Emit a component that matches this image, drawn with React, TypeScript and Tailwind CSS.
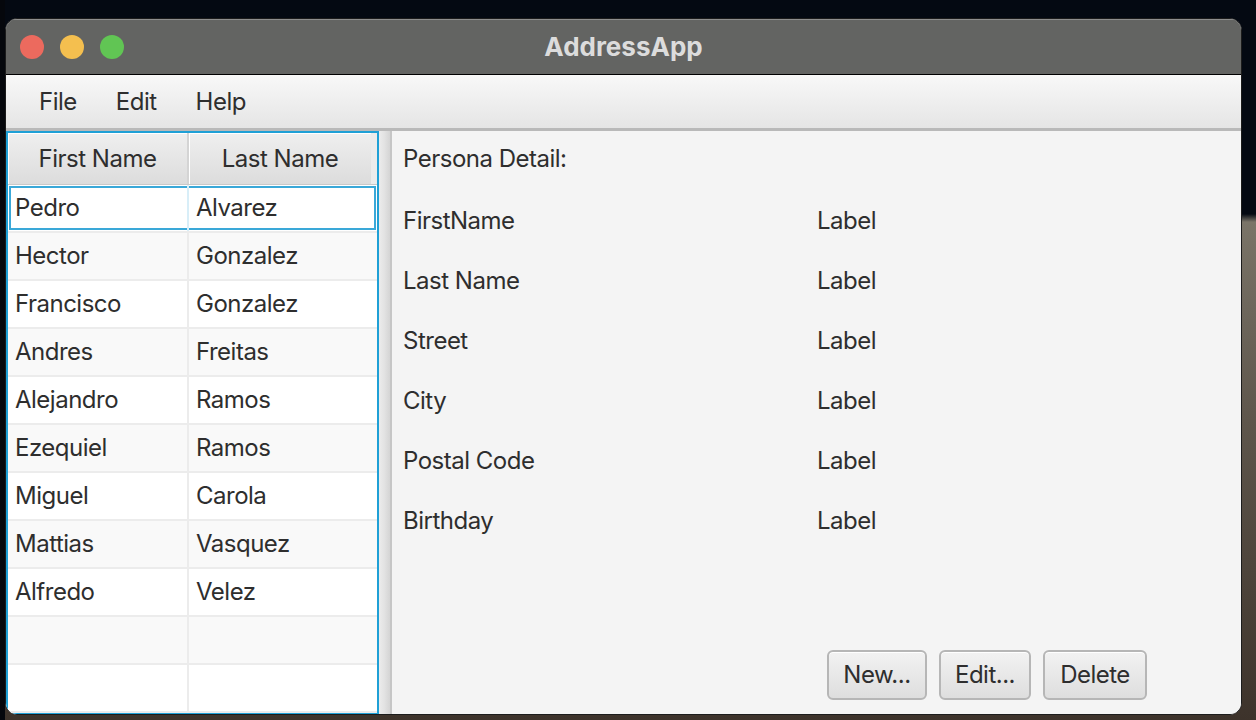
import React from "react";

const people = [
  ["Pedro", "Alvarez"],
  ["Hector", "Gonzalez"],
  ["Francisco", "Gonzalez"],
  ["Andres", "Freitas"],
  ["Alejandro", "Ramos"],
  ["Ezequiel", "Ramos"],
  ["Miguel", "Carola"],
  ["Mattias", "Vasquez"],
  ["Alfredo", "Velez"],
  ["", ""],
  ["", ""],
];

const details = ["FirstName", "Last Name", "Street", "City", "Postal Code", "Birthday"];

function FxButton({ children, width }: { children: React.ReactNode; width: string }) {
  return (
    <button
      className={`${width} h-[50px] rounded-[6px] border-2 border-[#b6b6b6] bg-[linear-gradient(180deg,#f2f2f2,#dedede)] text-[24px] tracking-[-0.5px] text-[#2e2e2e] shadow-[inset_0_1px_0_#ffffff]`}
    >
      {children}
    </button>
  );
}

export default function App() {
  return (
    <div className="h-[720px] w-[1256px] overflow-hidden bg-[linear-gradient(90deg,#05070c_0px,#05070c_5px,transparent_5px),linear-gradient(180deg,#040912_0px,#040912_214px,#7a7468_222px,#5e564c_420px,#3d332b_720px)] pl-[5px] pt-[18px] font-['Inter','Noto_Sans',sans-serif] tracking-[-0.5px] text-[#2e2e2e]">
      <div className="flex h-[697px] w-[1237px] flex-col overflow-hidden rounded-[12px] border border-[#1c1c1c] bg-[#f4f4f4]">
        {/* title bar */}
        <div className="relative flex h-[56px] shrink-0 items-center border-b border-black bg-[#636462] shadow-[inset_0_1px_0_#8e8e8e]">
          <div className="flex gap-[16px] pl-[14px]">
            <span className="h-[24px] w-[24px] rounded-full bg-[#ec6a5e]" />
            <span className="h-[24px] w-[24px] rounded-full bg-[#f4bf4f]" />
            <span className="h-[24px] w-[24px] rounded-full bg-[#61c554]" />
          </div>
          <div className="absolute inset-0 flex items-center justify-center text-[26px] font-bold tracking-normal text-[#dcdcdc]">
            AddressApp
          </div>
        </div>

        {/* menu bar */}
        <div className="flex h-[56px] shrink-0 items-center gap-[39px] border-b-[3px] border-[#b9b9b9] bg-[linear-gradient(180deg,#f8f8f8,#e5e5e5)] pl-[33px] text-[24px]">
          <span>File</span>
          <span>Edit</span>
          <span>Help</span>
        </div>

        {/* content */}
        <div className="flex min-h-0 flex-1">
          {/* table */}
          <div className="flex h-[584px] w-[373px] shrink-0 flex-col border-2 border-[#1fa0d6] bg-white">
            <div className="flex h-[52px] shrink-0 border-b border-[#c9c9c9] bg-[linear-gradient(180deg,#efefef,#dcdcdc)] text-[24px]">
              <div className="flex w-[181px] items-center justify-center border-r-2 border-[#d4d4d4] shadow-[inset_1px_1px_0_#ffffff]">
                First Name
              </div>
              <div className="flex w-[182px] items-center justify-center shadow-[inset_1px_1px_0_#ffffff]">
                Last Name
              </div>
              <div className="flex-1 bg-[#ececec]" />
            </div>
            {people.map(([first, last], i) => (
              <div
                key={i}
                className={`flex h-[48px] shrink-0 border-b-2 border-[#ececec] text-[24px] ${i === 0 ? "bg-white shadow-[inset_0_0_0_1px_#ffffff,inset_0_0_0_3px_#3aa8d8]" : i % 2 === 1 ? "bg-[#f9f9f9]" : "bg-white"}`}
              >
                <div className={`flex w-[181px] items-center border-r-2 pl-[7px] ${i === 0 ? "border-[#d8eef8]" : "border-[#ececec]"}`}>
                  {first}
                </div>
                <div className="flex flex-1 items-center pl-[7px]">{last}</div>
              </div>
            ))}
          </div>

          {/* split divider */}
          <div className="w-[13px] shrink-0 border-r-2 border-[#c6c6c6] bg-[linear-gradient(90deg,#ececec,#e2e2e2_50%,#d4d4d4)]" />

          {/* detail panel */}
          <div className="flex flex-1 flex-col bg-[#f4f4f4] pl-[11px] text-[24px]">
            <div className="flex h-[56px] items-center">Persona Detail:</div>
            <div className="grid auto-rows-[60px] grid-cols-[414px_1fr] pt-[4px]">
              {details.map((d) => (
                <React.Fragment key={d}>
                  <div className="flex items-center">{d}</div>
                  <div className="flex items-center">Label</div>
                </React.Fragment>
              ))}
            </div>
            <div className="mt-auto flex justify-end gap-[12px] pb-[14px] pr-[94px]">
              <FxButton width="w-[100px]">New...</FxButton>
              <FxButton width="w-[92px]">Edit...</FxButton>
              <FxButton width="w-[104px]">Delete</FxButton>
            </div>
          </div>
        </div>
      </div>
    </div>
  );
}
